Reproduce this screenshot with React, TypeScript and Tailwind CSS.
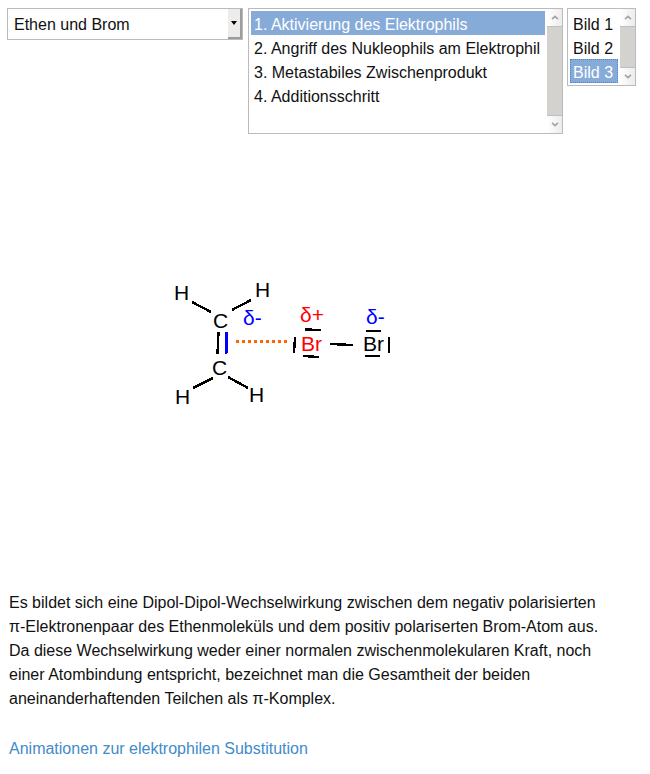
import { useState } from "react";

const steps = [
  "1. Aktivierung des Elektrophils",
  "2. Angriff des Nukleophils am Elektrophil",
  "3. Metastabiles Zwischenprodukt",
  "4. Additionsschritt",
];
const images = ["Bild 1", "Bild 2", "Bild 3"];

function Scrollbar() {
  return (
    <div aria-hidden="true" className="flex w-[15px] flex-col bg-[#d4d2cf]">
      <div className="flex h-[18px] items-center justify-center border-b border-[#bebebe] bg-linear-to-r from-white to-[#ececec]">
        <svg width="8" height="5" viewBox="0 0 8 5" fill="none" stroke="#a3a3a3" strokeWidth="1.6">
          <path d="M1 4.2 4 1.4 7 4.2" />
        </svg>
      </div>
      <div className="flex-1" />
      <div className="flex h-[18px] items-center justify-center border-t border-[#bebebe] bg-linear-to-r from-white to-[#ececec]">
        <svg width="8" height="5" viewBox="0 0 8 5" fill="none" stroke="#a3a3a3" strokeWidth="1.6">
          <path d="M1 0.8 4 3.6 7 0.8" />
        </svg>
      </div>
    </div>
  );
}

type ListProps = {
  label: string;
  items: string[];
  rows: number;
  initial: number;
  listClass: string;
  optionClass: string;
};

function ListBox({ label, items, rows, initial, listClass, optionClass }: ListProps) {
  const [value, setValue] = useState(items[initial]);
  return (
    <div className="flex border border-[#bbb] bg-white">
      <select
        aria-label={label}
        size={rows}
        value={value}
        onChange={(e) => setValue(e.target.value)}
        className={"appearance-none overflow-hidden p-0.5 outline-none [scrollbar-width:none] " + listClass}
      >
        {items.map((item) => (
          <option
            key={item}
            className={
              "h-6 min-h-6 px-[3px] pt-[5px] pb-0 checked:bg-linear-to-r checked:from-[#86abd9] checked:to-[#86abd9] checked:[-webkit-text-fill-color:#fff] " +
              optionClass
            }
          >
            {item}
          </option>
        ))}
      </select>
      <Scrollbar />
    </div>
  );
}

function Molecule() {
  return (
    <svg
      role="img"
      aria-label="π-Komplex aus Ethen und Brom"
      width="400"
      height="457"
      viewBox="7 134 400 457"
      fontSize="21"
      className="block font-['Liberation_Sans',Arial,sans-serif]"
    >
      <g>
        <text x="174" y="300">H</text>
        <text x="255" y="297">H</text>
        <text x="213" y="328">C</text>
        <text x="212" y="375">C</text>
        <text x="175" y="404">H</text>
        <text x="249" y="402">H</text>
        <text x="363" y="351">Br</text>
      </g>
      <g fill="#f00">
        <text x="301" y="351">Br</text>
        <text x="300" y="322">δ+</text>
      </g>
      <g fill="#00f">
        <text x="243" y="325">δ-</text>
        <text x="366" y="324">δ-</text>
      </g>
      <g fill="none" stroke="#000" strokeWidth="2.4" shapeRendering="crispEdges">
        <path d="M192 302 211 312M232 310 251 300M193 388 213 378M228 377 248 388" />
        <path d="M218.5 332 217.5 354M305 329.5 321 330M303 356 319 357M330 344 353 345M366 331 381 331M365 356 380 356M295 337 294 353M389 337 389 353" />
        <path stroke="#00f" strokeWidth="3" d="M227 332 226 354" />
      </g>
      <path d="M236 341.5H288" stroke="#f60" strokeWidth="3" strokeDasharray="3 3" shapeRendering="crispEdges" />
    </svg>
  );
}

export default function App() {
  return (
    <main className="bg-white px-[7px] pt-2 pb-3 font-['Liberation_Sans',Arial,sans-serif] text-base leading-6 text-[#111]">
      <form className="flex items-start">
        <div className="mr-[5px] grid h-8 w-[236px] grid-cols-[1fr_14px] border border-[#bbb]">
          <select
            aria-label="Reaktion"
            className="col-span-2 col-start-1 row-start-1 appearance-none bg-transparent pt-0.5 pl-1.5 outline-none"
          >
            <option>Ethen und Brom</option>
          </select>
          <span
            aria-hidden="true"
            className="pointer-events-none col-start-2 row-start-1 flex items-center justify-center border-r-2 border-b-2 border-[#9d9c9a] bg-[#edecea]"
          >
            <svg width="6" height="4" viewBox="0 0 6 4">
              <path d="M0 0H6L3 4Z" fill="#000" />
            </svg>
          </span>
        </div>
        <div className="mr-1">
          <ListBox
            label="Reaktionsschritt"
            items={steps}
            rows={5}
            initial={0}
            listClass="h-[124px] w-[298px]"
            optionClass=""
          />
        </div>
        <ListBox
          label="Bild"
          items={images}
          rows={3}
          initial={2}
          listClass="h-[76px] w-[52px]"
          optionClass="checked:outline checked:outline-dotted checked:outline-[#4f86c8] checked:-outline-offset-1"
        />
      </form>
      <Molecule />
      <p className="max-w-[600px] pl-0.5">
        Es bildet sich eine Dipol-Dipol-Wechselwirkung zwischen dem negativ polarisierten π-Elektronenpaar des
        Ethenmoleküls und dem positiv polariserten Brom-Atom aus. Da diese Wechselwirkung weder einer normalen
        zwischenmolekularen Kraft, noch einer Atombindung entspricht, bezeichnet man die Gesamtheit der beiden
        aneinanderhaftenden Teilchen als π-Komplex.
      </p>
      <p className="mt-[26px] pl-0.5">
        <a href="#substitution" className="text-[#428bca]">
          Animationen zur elektrophilen Substitution
        </a>
      </p>
    </main>
  );
}
